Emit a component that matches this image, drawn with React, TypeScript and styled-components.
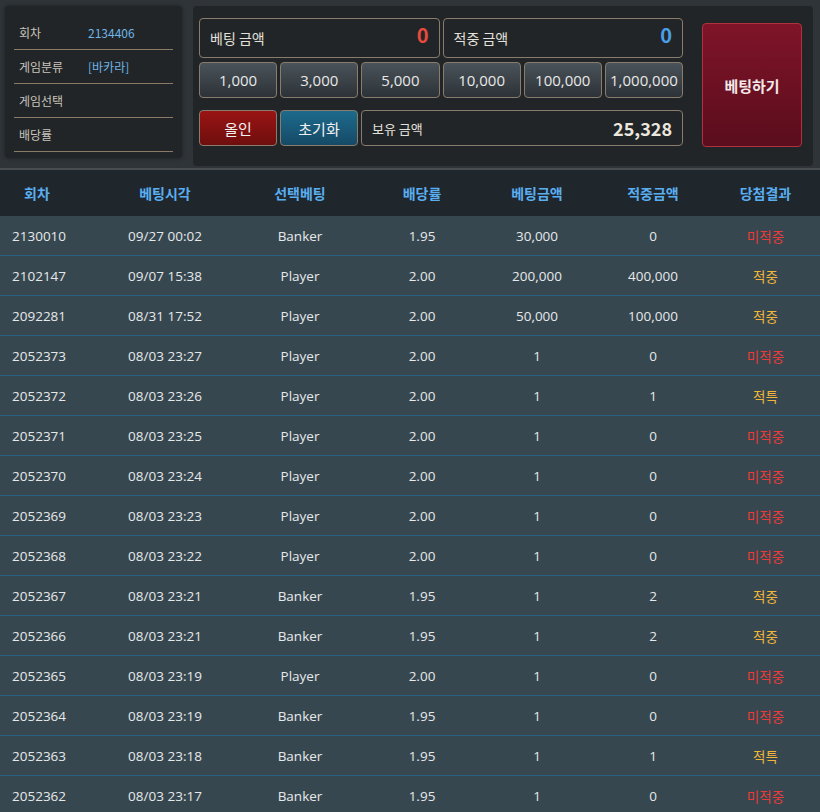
import React from "react";
import styled, { createGlobalStyle } from "styled-components";

const Global = createGlobalStyle`
  body { margin: 0; background: #2e3438; font-family: "Noto Sans CJK KR", "Noto Sans", sans-serif; }
`;

const Top = styled.div`
  display: flex;
  gap: 11px;
  padding: 6px 7px 2px 5px;
  height: 160px;
  border-bottom: 2px solid #4a4d4f;
  box-sizing: border-box;
  height: 170px;
`;
const InfoPanel = styled.div`
  width: 178px;
  height: 152px;
  background: #212528;
  border-radius: 4px;
  padding: 10px 9px 0 9px;
  box-sizing: border-box;
  box-shadow: 0 0 4px rgba(0,0,0,0.4);
`;
const InfoRow = styled.div`
  display: flex;
  align-items: center;
  height: 33px;
  border-bottom: 1px solid #8a7a66;
  font-size: 12px;
  padding-left: 5px;
`;
const InfoKey = styled.span`
  color: #c9c4bc;
  width: 69px;
`;
const InfoVal = styled.span`
  color: #6fb6e6;
`;
const BetPanel = styled.div`
  flex: 1;
  height: 160px;
  background: #212528;
  border-radius: 4px;
  display: flex;
  padding: 12px 11px 0 6px;
  box-sizing: border-box;
  gap: 19px;
`;
const Controls = styled.div`
  display: flex;
  flex-direction: column;
  width: 484px;
`;
const Line = styled.div<{ $mt?: number }>`
  display: flex;
  gap: 3px;
  margin-top: ${(p) => p.$mt ?? 0}px;
`;
const Field = styled.div`
  flex: 1;
  height: 40px;
  border: 1px solid #8a7c6c;
  border-radius: 4px;
  display: flex;
  align-items: center;
  justify-content: space-between;
  padding: 0 10px;
  box-sizing: border-box;
  color: #e4e0da;
  font-size: 14px;
`;
const Amount = styled.span<{ $c: string; $size?: number }>`
  color: ${(p) => p.$c};
  font-weight: 700;
  font-size: ${(p) => p.$size ?? 20}px;
  align-self: ${(p) => (p.$size ? "center" : "flex-start")};
  margin-top: ${(p) => (p.$size ? 0 : 1)}px;
`;
const Chip = styled.button`
  flex: 1;
  height: 36px;
  border: 1px solid #8a7c6c;
  border-radius: 4px;
  background: linear-gradient(#4a535a, #2c3237);
  color: #e8e8e8;
  font-size: 15px;
  font-family: "Open Sans", sans-serif;
  padding: 0;
`;
const ActBtn = styled.button<{ $bg: string }>`
  width: 78px;
  height: 36px;
  border: 1px solid #8a7c6c;
  border-radius: 4px;
  background: ${(p) => p.$bg};
  color: #f2f2f2;
  font-size: 15px;
  font-family: inherit;
  flex: none;
`;
const BetBtn = styled.button`
  margin-top: 5px;
  width: 100px;
  height: 124px;
  border: 1px solid #b0323e;
  border-radius: 4px;
  background: linear-gradient(#7f1428, #5a0d1d);
  color: #f3e9e9;
  font-weight: 700;
  font-size: 15px;
  font-family: inherit;
`;

const cols = "95px 140px 130px 114px 116px 116px 109px";
const Head = styled.div`
  display: grid;
  grid-template-columns: ${cols};
  height: 46px;
  background: #1f262c;
  align-items: center;
  color: #5aaef0;
  font-weight: 700;
  font-size: 14px;
  text-align: center;
  & > span:first-child { text-align: left; padding-left: 24px; }
`;
const Row = styled.div`
  display: grid;
  grid-template-columns: ${cols};
  height: 40px;
  background: #37474f;
  border-bottom: 1px solid #2a5f82;
  box-sizing: border-box;
  align-items: center;
  color: #e6e9eb;
  font-size: 13.5px;
  font-family: "Open Sans", "Noto Sans CJK KR", sans-serif;
  text-align: center;
  & > span:first-child { text-align: left; padding-left: 12px; }
`;
const Result = styled.span<{ $win: boolean }>`
  color: ${(p) => (p.$win ? "#f2b53a" : "#ea3b3b")};
  font-family: "Noto Sans CJK KR", sans-serif;
`;

const rows: [string, string, string, string, string, string, string][] = [
  ["2130010", "09/27 00:02", "Banker", "1.95", "30,000", "0", "미적중"],
  ["2102147", "09/07 15:38", "Player", "2.00", "200,000", "400,000", "적중"],
  ["2092281", "08/31 17:52", "Player", "2.00", "50,000", "100,000", "적중"],
  ["2052373", "08/03 23:27", "Player", "2.00", "1", "0", "미적중"],
  ["2052372", "08/03 23:26", "Player", "2.00", "1", "1", "적특"],
  ["2052371", "08/03 23:25", "Player", "2.00", "1", "0", "미적중"],
  ["2052370", "08/03 23:24", "Player", "2.00", "1", "0", "미적중"],
  ["2052369", "08/03 23:23", "Player", "2.00", "1", "0", "미적중"],
  ["2052368", "08/03 23:22", "Player", "2.00", "1", "0", "미적중"],
  ["2052367", "08/03 23:21", "Banker", "1.95", "1", "2", "적중"],
  ["2052366", "08/03 23:21", "Banker", "1.95", "1", "2", "적중"],
  ["2052365", "08/03 23:19", "Player", "2.00", "1", "0", "미적중"],
  ["2052364", "08/03 23:19", "Banker", "1.95", "1", "0", "미적중"],
  ["2052363", "08/03 23:18", "Banker", "1.95", "1", "1", "적특"],
  ["2052362", "08/03 23:17", "Banker", "1.95", "1", "0", "미적중"],
];

const chips = ["1,000", "3,000", "5,000", "10,000", "100,000", "1,000,000"];

export default function App() {
  return (
    <>
      <Global />
      <Top>
        <InfoPanel>
          <InfoRow><InfoKey>회차</InfoKey><InfoVal>2134406</InfoVal></InfoRow>
          <InfoRow><InfoKey>게임분류</InfoKey><InfoVal>[바카라]</InfoVal></InfoRow>
          <InfoRow><InfoKey>게임선택</InfoKey></InfoRow>
          <InfoRow><InfoKey>배당률</InfoKey></InfoRow>
        </InfoPanel>
        <BetPanel>
          <Controls>
            <Line>
              <Field>베팅 금액<Amount $c="#e84a3c">0</Amount></Field>
              <Field>적중 금액<Amount $c="#4aa0e8">0</Amount></Field>
            </Line>
            <Line $mt={4}>
              {chips.map((c) => <Chip key={c}>{c}</Chip>)}
            </Line>
            <Line $mt={12}>
              <ActBtn $bg="linear-gradient(#9a1414, #6e0e0e)">올인</ActBtn>
              <ActBtn $bg="linear-gradient(#1d6a8c, #154a66)">초기화</ActBtn>
              <Field style={{ height: 36, fontSize: 13 }}>보유 금액<Amount $c="#ece7de" $size={18}>25,328</Amount></Field>
            </Line>
          </Controls>
          <BetBtn>베팅하기</BetBtn>
        </BetPanel>
      </Top>
      <Head>
        {["회차", "베팅시각", "선택베팅", "배당률", "베팅금액", "적중금액", "당첨결과"].map((h) => <span key={h}>{h}</span>)}
      </Head>
      {rows.map((r) => (
        <Row key={r[0]}>
          {r.slice(0, 6).map((c, i) => <span key={i}>{c}</span>)}
          <Result $win={r[6] !== "미적중"}>{r[6]}</Result>
        </Row>
      ))}
    </>
  );
}
